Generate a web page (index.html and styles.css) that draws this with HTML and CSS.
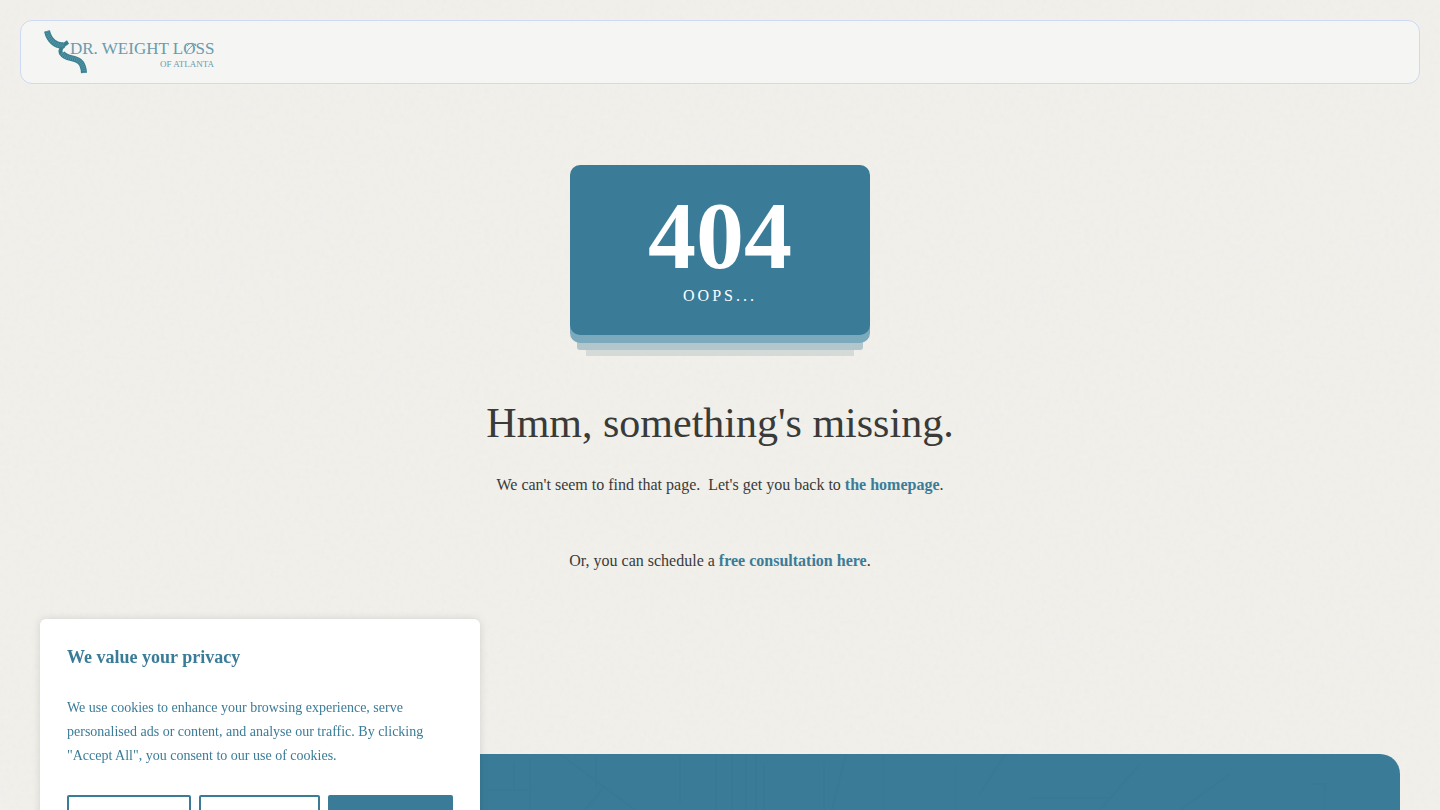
FILE: index.html
```html
<!DOCTYPE html>
<html lang="en">
<head>
<meta charset="utf-8">
<meta name="viewport" content="width=device-width, initial-scale=1">
<title>Page not found - Dr. Weight Loss of Atlanta</title>
<link rel="stylesheet" href="styles.css">
</head>

<body>
<header class="header">
<a class="logo" href="#" aria-label="Dr. Weight Loss of Atlanta">
<svg width="172" height="46" viewBox="0 0 172 46">
<g class="ribbon">
<path d="M3 2 C5 11 12 18 20 16"/>
<path class="twist" d="M24 13 C19 16 15 20 17 25"/>
<path d="M18 24 C23 33 39 24 40 44"/>
</g>
<g class="ribs">
<path d="M3 2 C5 11 12 18 20 16"/>
<path d="M18 24 C23 33 39 24 40 44"/>
</g>
<text class="name" x="26" y="25">DR. WEIGHT LOSS</text>
<path class="slash" d="M142 25 C145 18 149 16 152 15 M143 17 C146 13 151 14 152 17"/>
<text class="place" x="170" y="38">OF ATLANTA</text>
</svg>
</a>
</header>

<main class="main">
<div class="card">
<p class="code">404</p>
<p class="oops">OOPS...</p>
</div>
<h1>Hmm, something's missing.</h1>
<p class="text">We can't seem to find that page.&nbsp; Let's get you back to <a href="#">the homepage</a>.</p>
<p class="text">Or, you can schedule a <a href="#">free consultation here</a>.</p>
</main>

<footer class="footer">
<svg class="streets" width="100%" height="56">
<path d="M8 36 H50 M50 4 V56 M34 8 V36 M80 0 L155 56 M125 32 L105 56 M116 4 V34 M200 0 V50 M236 0 V56 M252 0 V56 M266 0 V56 M276 0 V56 M284 10 V56 M344 8 V56 M366 0 L352 56 M403 0 V56 M475 12 V56"/>
<path d="M525 0 L500 40 M660 10 L620 56 M550 44 H630 M750 20 L700 56 M830 30 H845 V56"/>
</svg>
</footer>

<section class="consent" aria-labelledby="consent-title">
<h2 id="consent-title">We value your privacy</h2>
<p>We use cookies to enhance your browsing experience, serve personalised ads or content, and analyse our traffic. By clicking "Accept All", you consent to our use of cookies.</p>
<div class="buttons">
<button type="button" aria-label="Customise"></button>
<button type="button" aria-label="Reject All"></button>
<button type="button" class="accept" aria-label="Accept All"></button>
</div>
</section>
</body>
</html>
```
FILE: styles.css
```css
* {
	box-sizing: border-box;
	margin: 0;
}

body {
	display: flex;
	flex-direction: column;
	min-height: 100vh;
	background: #f1f0eb url("data:image/svg+xml,%3Csvg xmlns='http://www.w3.org/2000/svg' width='300' height='300'%3E%3Cfilter id='n'%3E%3CfeTurbulence type='fractalNoise' baseFrequency='.2' numOctaves='3' stitchTiles='stitch'/%3E%3CfeColorMatrix type='saturate' values='0'/%3E%3C/filter%3E%3Crect width='300' height='300' filter='url(%23n)' opacity='.04'/%3E%3C/svg%3E");
	color: #3a3a38;
	font: 16px/26px "Liberation Serif", "Times New Roman", serif;
}

a {
	color: #3a7c98;
	font-weight: bold;
	text-decoration: none;
}

/* header */
.header {
	display: flex;
	align-items: center;
	height: 64px;
	margin: 20px 20px 0;
	padding: 0 23px;
	background: #f5f5f3;
	border: 1px solid #ced9f5;
	border-radius: 12px;
}

.logo,
.logo svg {
	display: block;
}

.ribbon path {
	fill: none;
	stroke: #39808f;
	stroke-width: 6;
}

.ribbon .twist {
	stroke-width: 4;
}

.ribs path {
	fill: none;
	stroke: #5595a8;
	stroke-width: 4;
	stroke-dasharray: 1 1;
}

.name,
.place {
	fill: #6a9bad;
	font-weight: normal;
}

.name {
	font-size: 17px;
}

.place {
	font-size: 9px;
	text-anchor: end;
}

.logo .slash {
	fill: none;
	stroke: #6a9bad;
}

/* page content */
.main {
	display: flex;
	flex-direction: column;
	align-items: center;
	padding: 81px 20px 180px;
	text-align: center;
}

.card {
	width: 300px;
	height: 170px;
	padding-top: 24px;
	background: #3a7c98;
	border-radius: 10px;
	box-shadow: 0 8px 0 #7baabd, 0 22px 0 -7px #b2c6cb, 0 37px 0 -16px #d4dad8;
	color: #fff;
}

.code {
	font-size: 96px;
	font-weight: bold;
	line-height: 94px;
}

.oops {
	letter-spacing: 3px;
}

h1 {
	margin: 63px 0 24px;
	font-size: 42px;
	font-weight: normal;
	line-height: 50px;
}

.text + .text {
	margin-top: 50px;
}

.footer {
	flex: 1;
	min-height: 56px;
	margin: 0 40px;
	overflow: hidden;
	background: #3a7c98;
	border-radius: 20px 20px 0 0;
}

.streets {
	display: block;
	padding-left: 440px;
	overflow: visible;
}

.streets path {
	fill: none;
	stroke: #367690;
	stroke-width: 2;
	opacity: .4;
}

/* cookie notice */
.consent {
	position: fixed;
	top: 619px;
	left: 40px;
	width: 440px;
	padding: 24px 27px;
	background: #fff;
	border-radius: 6px;
	box-shadow: 0 0 8px rgba(0, 0, 0, .12);
	color: #3a7c98;
}

h2 {
	margin-bottom: 25px;
	font-size: 18px;
	line-height: 28px;
}

.consent p {
	font-size: 14px;
	line-height: 24px;
}

.buttons {
	display: grid;
	grid-template-columns: 124fr 121fr 125fr;
	gap: 8px;
	margin-top: 27px;
}

button {
	height: 44px;
	background: #fff;
	border: 2px solid #3a7c98;
	border-radius: 2px;
}

.accept {
	background: #3a7c98;
}
```
